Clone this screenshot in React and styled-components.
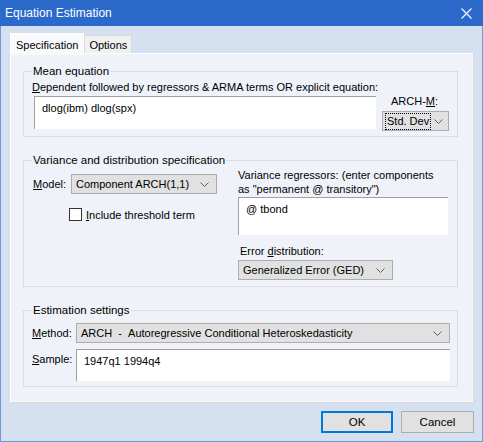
import React from 'react'
import styled, { createGlobalStyle } from 'styled-components'

const GlobalStyle = createGlobalStyle`
  html, body {
    margin: 0;
    padding: 0;
    background: #d5e0f0;
  }
  * {
    box-sizing: border-box;
  }
`

const Window = styled.div`
  width: 483px;
  height: 442px;
  display: flex;
  flex-direction: column;
  background: #d5e0f0;
  border: 1px solid #6d98dc;
  border-top: none;
  font-family: 'Liberation Sans', Arial, sans-serif;
  font-size: 11px;
  color: #000;
`

const TitleBar = styled.div`
  height: 26px;
  margin: 0 -1px;
  background: #2b6acb;
  color: #fff;
  display: flex;
  align-items: center;
  justify-content: space-between;
  padding: 0 11px 0 5px;
  font-size: 12px;
`

const CloseIcon = styled.svg`
  width: 11px;
  height: 11px;
`

const Body = styled.div`
  flex: 1;
  display: flex;
  flex-direction: column;
  padding: 7px 8px 0 9px;
`

const TabStrip = styled.div`
  display: flex;
  align-items: flex-end;
  height: 20px;
  position: relative;
  z-index: 1;
`

const Tab = styled.div`
  height: ${(p) => (p.$active ? '22px' : '18px')};
  padding: 0 ${(p) => (p.$active ? '5px' : '4px')};
  margin-bottom: ${(p) => (p.$active ? '-2px' : '0')};
  display: flex;
  align-items: center;
  background: ${(p) => (p.$active ? '#f8fafc' : '#f0f0f0')};
  border: 1px solid ${(p) => (p.$active ? '#ffffff' : '#d9d9d9')};
  border-bottom: none;
`

const Panel = styled.div`
  width: 464px;
  height: 350px;
  background: #eff3f9;
  border: 1px solid #ffffff;
  border-right-color: #d8d8d8;
  border-bottom-color: #d8d8d8;
  box-shadow: inset -1px -1px 0 #f8f8f8;
  padding: 9px 15px 0 12px;
  display: flex;
  flex-direction: column;
  gap: 15px;
`

const Group = styled.fieldset`
  margin: 0;
  padding: 0 8px 0 8px;
  border: 1px solid #dcdcdc;
  height: ${(p) => p.$h}px;
  min-width: 0;
`

const Legend = styled.legend`
  padding: 0 1px;
  margin-left: 0;
  line-height: 16px;
  font-size: 11.5px;
`

const Row = styled.div`
  display: flex;
  align-items: ${(p) => p.$align || 'flex-start'};
`

const Column = styled.div`
  display: flex;
  flex-direction: column;
  flex-shrink: 0;
  width: ${(p) => (p.$w ? `${p.$w}px` : 'auto')};
  margin-left: ${(p) => p.$ml || 0}px;
  margin-top: ${(p) => p.$mt || 0}px;
`

const Label = styled.div`
  line-height: ${(p) => p.$lh || 16}px;
  margin-left: ${(p) => p.$ml || 0}px;
  width: ${(p) => (p.$w ? `${p.$w}px` : 'auto')};
  flex-shrink: 0;
  white-space: nowrap;
`

const TextBox = styled.div`
  width: ${(p) => p.$w}px;
  height: ${(p) => p.$h}px;
  margin-left: ${(p) => p.$ml || 0}px;
  flex-shrink: 0;
  background: #ffffff;
  border-top: 1px solid #a0a0a0;
  border-left: 1px solid #a0a0a0;
  padding: 4px 0 0 7px;
  line-height: 14px;
  white-space: nowrap;
`

const Combo = styled.div`
  width: ${(p) => p.$w}px;
  height: ${(p) => p.$h || 20}px;
  margin-left: ${(p) => p.$ml || 0}px;
  flex-shrink: 0;
  background: #e1e1e1;
  border: 1px solid #adadad;
  display: flex;
  align-items: center;
  justify-content: space-between;
  padding: 0 ${(p) => p.$pr || 7}px 0 3px;
  white-space: nowrap;
`

const ComboText = styled.span`
  padding: 0 1px;
  line-height: 15px;
  outline: ${(p) => (p.$focus ? '1px dotted #000' : 'none')};
`

const Chevron = () => (
  <svg width="9" height="5" viewBox="0 0 9 5" style={{ flexShrink: 0 }}>
    <path d="M0.5 0.5 L4.5 4.5 L8.5 0.5" fill="none" stroke="#606060" strokeWidth="1" />
  </svg>
)

const CheckRow = styled.label`
  display: flex;
  align-items: center;
  gap: 4px;
  margin: 14px 0 0 37px;
  white-space: nowrap;
`

const CheckBox = styled.span`
  width: 13px;
  height: 13px;
  border: 1px solid #333;
  background: #fff;
`

const Footer = styled.div`
  display: flex;
  justify-content: flex-end;
  gap: 8px;
  padding: 8px 0 0 0;
`

const Button = styled.div`
  width: ${(p) => (p.$primary ? 72 : 73)}px;
  height: 22px;
  display: flex;
  align-items: center;
  justify-content: center;
  background: #e1e1e1;
  font-size: 11.5px;
  border: ${(p) => (p.$primary ? '2px solid #0078d7' : '1px solid #adadad')};
`

export default function App() {
  return (
    <>
      <GlobalStyle />
      <Window>
        <TitleBar>
          <span>Equation Estimation</span>
          <CloseIcon viewBox="0 0 11 11">
            <path d="M0.5 0.5 L10.5 10.5 M10.5 0.5 L0.5 10.5" stroke="#fff" strokeWidth="1.1" />
          </CloseIcon>
        </TitleBar>
        <Body>
          <TabStrip>
            <Tab $active>Specification</Tab>
            <Tab>Options</Tab>
          </TabStrip>
          <Panel>
            <Group $h={74}>
              <Legend>Mean equation</Legend>
              <Row>
                <Column $w={344}>
                  <Label>
                    <u>D</u>ependent followed by regressors &amp; ARMA terms OR explicit equation:
                  </Label>
                  <TextBox $w={342} $h={33} $ml={2} style={{ marginTop: 1 }}>
                    dlog(ibm) dlog(spx)
                  </TextBox>
                </Column>
                <Column $ml={6} $mt={14}>
                  <Label $ml={9}>
                    ARCH-<u>M</u>:
                  </Label>
                  <Combo $w={67} $pr={5} style={{ marginTop: 2 }}>
                    <ComboText $focus>Std. Dev</ComboText>
                    <Chevron />
                  </Combo>
                </Column>
              </Row>
            </Group>

            <Group $h={135}>
              <Legend>Variance and distribution specification</Legend>
              <Row>
                <Column $w={206}>
                  <Row $align="center" style={{ marginTop: 6 }}>
                    <Label $w={38} $ml={1}>
                      <u>M</u>odel:
                    </Label>
                    <Combo $w={146}>
                      <ComboText>Component ARCH(1,1)</ComboText>
                      <Chevron />
                    </Combo>
                  </Row>
                  <CheckRow>
                    <CheckBox />
                    <span>
                      <u>I</u>nclude threshold term
                    </span>
                  </CheckRow>
                </Column>
                <Column>
                  <Label $lh={14}>Variance regressors: (enter components</Label>
                  <Label $lh={14}>as "permanent @ transitory")</Label>
                  <TextBox $w={210} $h={38} style={{ marginTop: 1 }}>
                    @ tbond
                  </TextBox>
                  <Label $ml={2} style={{ marginTop: 8 }}>
                    Error <u>d</u>istribution:
                  </Label>
                  <Combo $w={155} style={{ marginTop: 1 }}>
                    <ComboText>Generalized Error (GED)</ComboText>
                    <Chevron />
                  </Combo>
                </Column>
              </Row>
            </Group>

            <Group $h={85}>
              <Legend>Estimation settings</Legend>
              <Row $align="center" style={{ marginTop: 5 }}>
                <Label $w={44}>
                  <u>M</u>ethod:
                </Label>
                <Combo $w={374}>
                  <ComboText>ARCH&nbsp; - &nbsp;Autoregressive Conditional Heteroskedasticity</ComboText>
                  <Chevron />
                </Combo>
              </Row>
              <Row style={{ marginTop: 6 }}>
                <Label $w={44} style={{ marginTop: 2 }}>
                  <u>S</u>ample:
                </Label>
                <TextBox $w={374} $h={32}>
                  1947q1 1994q4
                </TextBox>
              </Row>
            </Group>
          </Panel>
          <Footer>
            <Button $primary>OK</Button>
            <Button>Cancel</Button>
          </Footer>
        </Body>
      </Window>
    </>
  )
}
